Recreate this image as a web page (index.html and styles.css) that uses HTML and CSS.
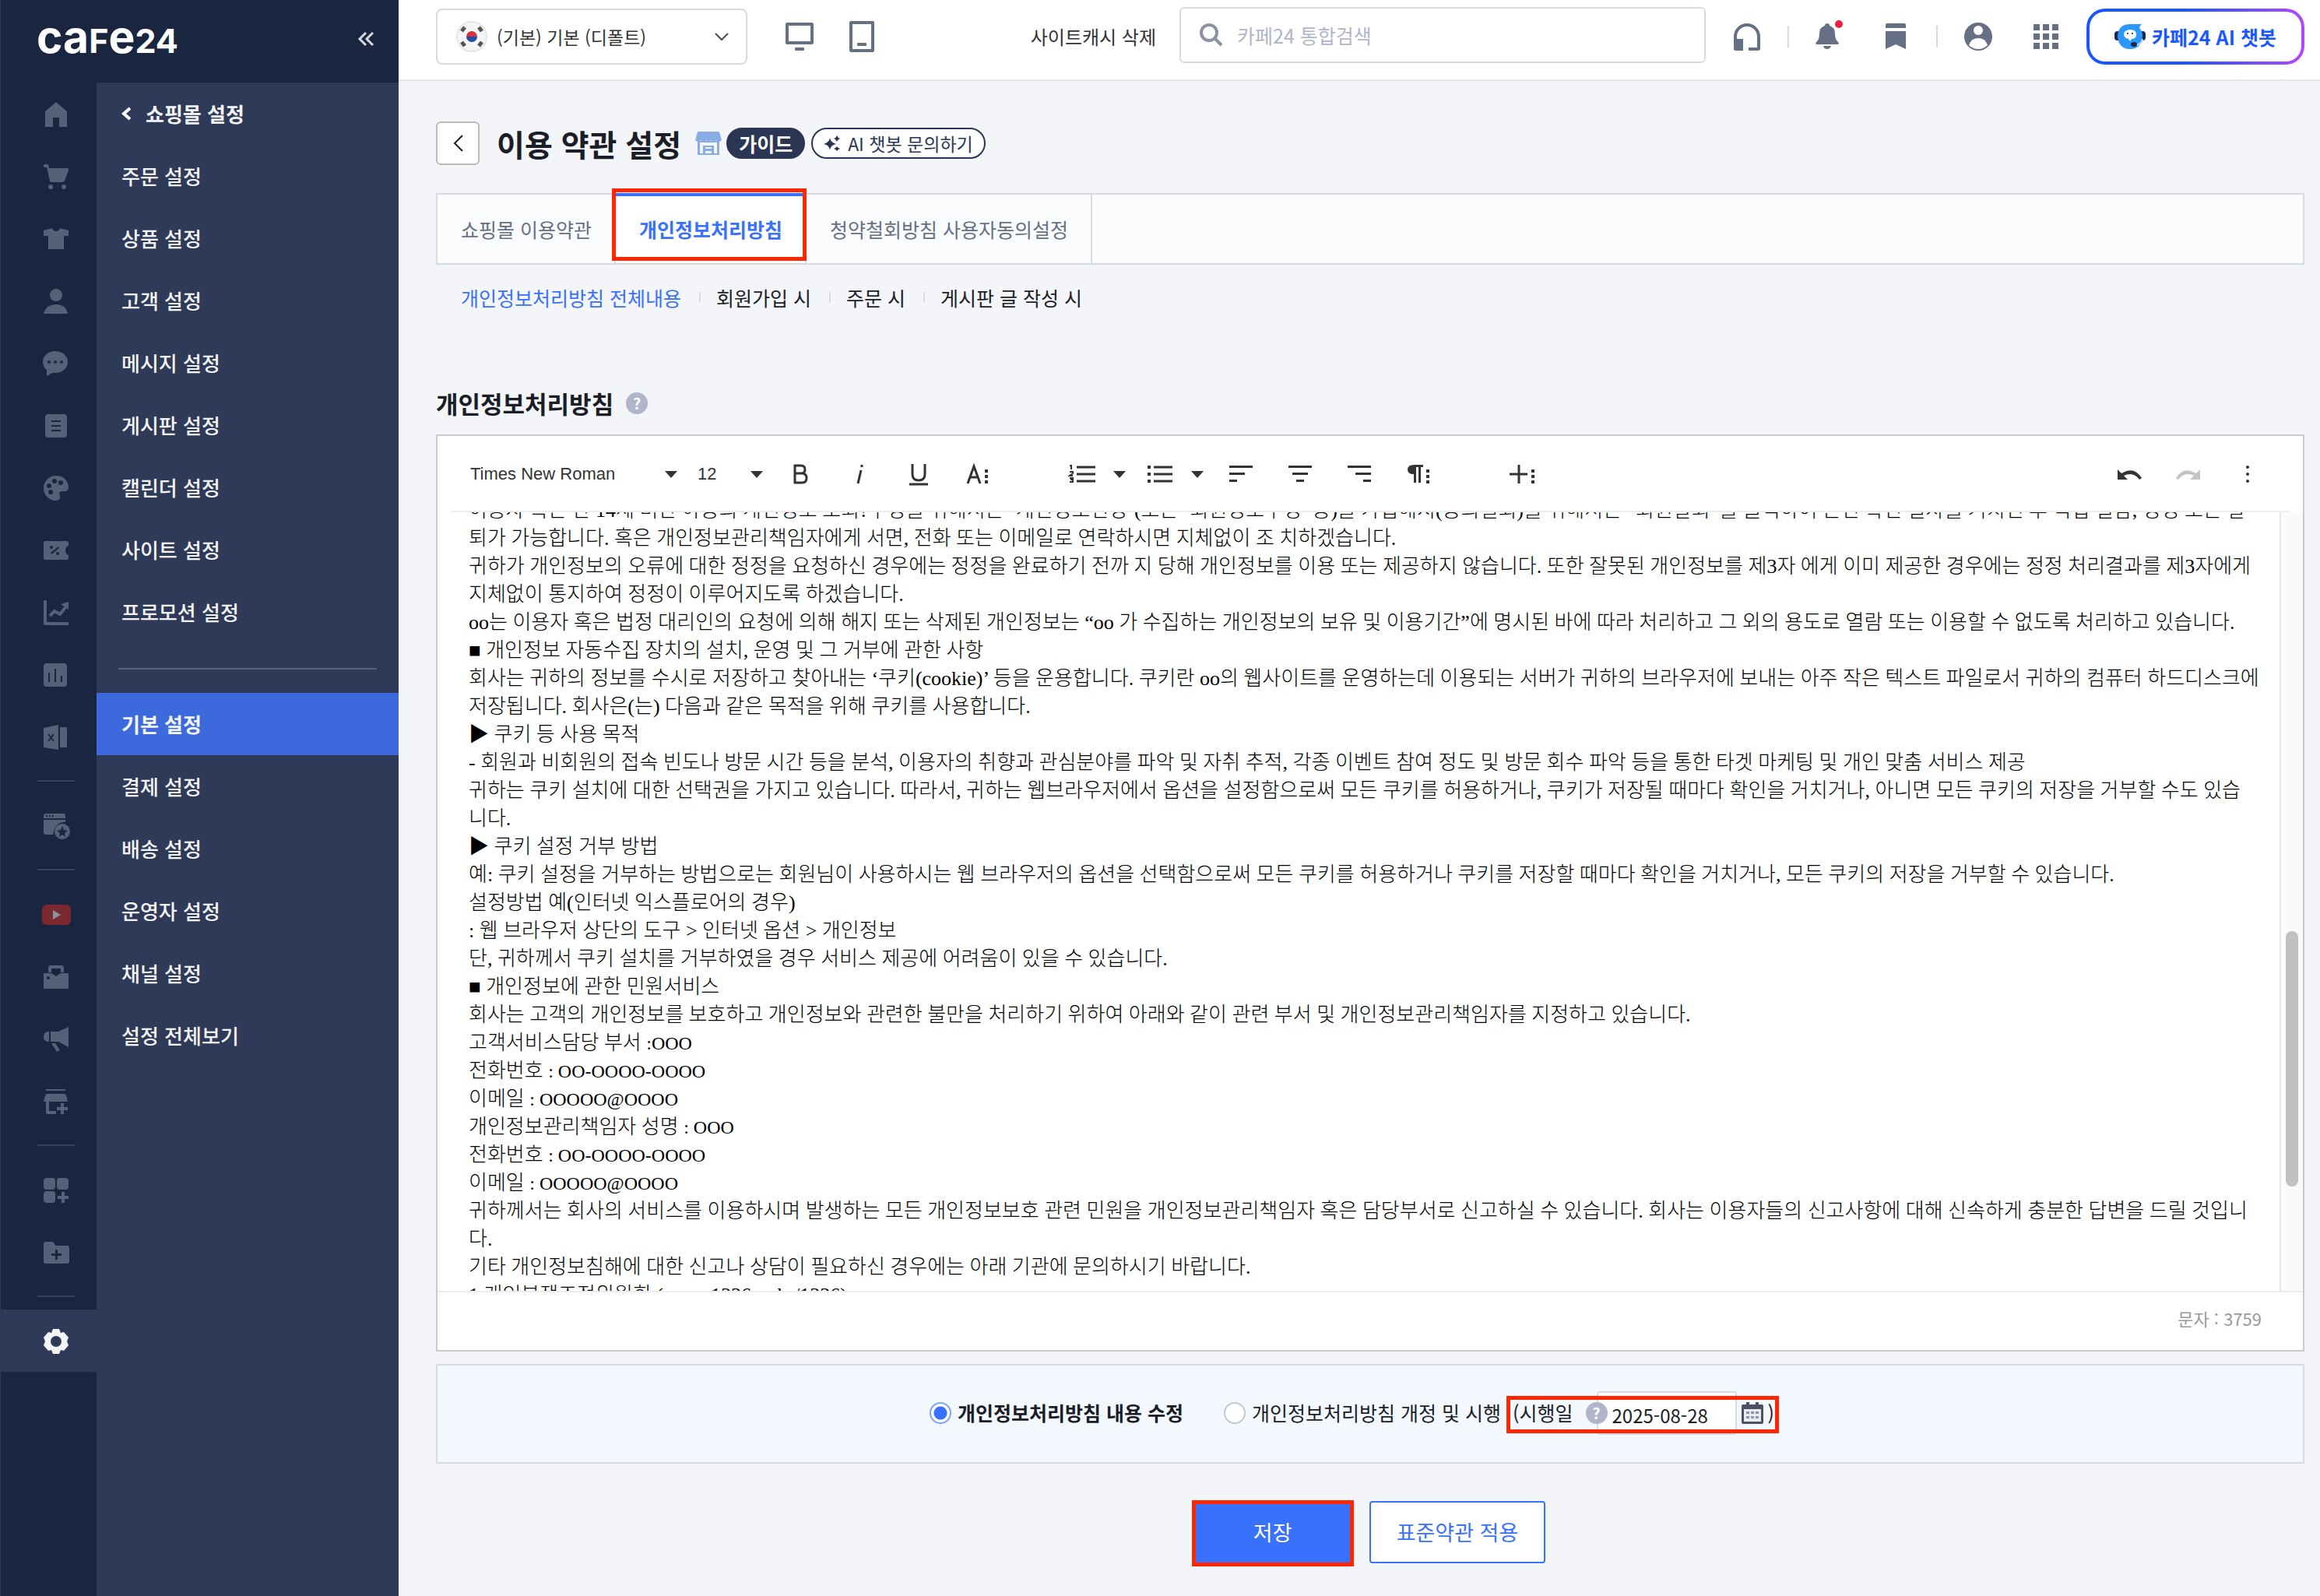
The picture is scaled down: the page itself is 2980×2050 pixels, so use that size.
FILE: index.html
```html
<!DOCTYPE html>
<html lang="ko">
<head>
    <meta charset="UTF-8">
    <meta name="viewport" content="width=device-width, initial-scale=1.0">
    <title>이용 약관 설정 - 카페24</title>
    <link rel="stylesheet" href="styles.css">
</head>
<body>
    <div class="layout">
        <aside class="sidebar">
            <div class="sidebar-head">
                <a href="#" class="logo" aria-label="cafe24"><span class="low">ca</span>F<span class="low">e</span>24</a>
                <button type="button" class="collapse" aria-label="메뉴 접기">
                    <svg width="20" height="18" viewBox="0 0 20 18" fill="none" stroke="#d5d8df" stroke-width="3"><path d="M10 1 2 9l8 8M19 1l-8 8 8 8"/></svg>
                </button>
            </div>
            <div class="sidebar-body">
                <nav class="rail" aria-label="주 메뉴">
                    <a href="#" aria-label="홈"><svg viewBox="0 0 32 32"><path d="M16 0 2 12v19q0 1 1 1h9V20h8v12h9q1 0 1-1V12z"/></svg></a>
                    <a href="#" aria-label="주문"><svg viewBox="0 0 32 32"><path d="M1 0h4q1 0 2 5h23q3 0 2 3l-5 13q-1 2-3 2H10q-2 0-2-2L4 4H1q-2-2 0-4z"/><circle cx="9" cy="29" r="3"/><circle cx="26" cy="29" r="3"/></svg></a>
                    <a href="#" aria-label="상품"><svg viewBox="0 0 32 32"><path d="M0 5 11 2q1 4 5 4t5-4l11 3v7h-6v16q0 1-1 1H7q-1 0-1-1V12H0z"/></svg></a>
                    <a href="#" aria-label="고객"><svg viewBox="0 0 32 32"><circle cx="16" cy="8" r="8"/><path d="M0 31q4-11 16-11t15 11q0 1-1 1H1q-1 0-1-1z"/></svg></a>
                    <a href="#" aria-label="메시지"><svg viewBox="0 0 32 32"><ellipse cx="15" cy="14" rx="16" ry="14"/><path d="M4 22v10l9-5z"/><g class="cut"><circle cx="7" cy="14" r="2"/><circle cx="15" cy="14" r="2"/><circle cx="23" cy="14" r="2"/></g></svg></a>
                    <a href="#" aria-label="게시판"><svg viewBox="0 0 32 32"><rect x="2" y="1" width="28" height="30" rx="4"/><path class="cut" d="M10 9h12v2H10zM10 15h12v2H10zM10 21h12v2H10z"/></svg></a>
                    <a href="#" aria-label="디자인"><svg viewBox="0 0 32 32"><path d="M16 0C7 0 0 7 0 16s7 16 16 16c4 0 6-3 5-6-2-4 0-6 3-6h3c3 0 5-2 5-5C32 6 25 0 16 0z"/><g class="cut"><circle cx="7" cy="13" r="3"/><circle cx="14" cy="7" r="3"/><circle cx="22" cy="9" r="3"/><circle cx="9" cy="21" r="3"/></g></svg></a>
                    <a href="#" aria-label="프로모션"><svg viewBox="0 0 32 32"><path d="M2 4h28q2 0 2 3v3q-4 1-4 6t4 6v3q0 3-2 3H2q-2 0-2-3V7q0-3 2-3z"/><g class="cut"><path d="M9 19 19 11l1 2L10 21z"/><circle cx="10" cy="12" r="2"/><circle cx="18" cy="20" r="2"/></g></svg></a>
                    <a href="#" aria-label="통계"><svg viewBox="0 0 32 32"><path d="M0 0h4v28h28v4H2q-2 0-2-2z"/><path d="m8 20 6-6 7 4 8-10" fill="none" stroke="#566079" stroke-width="4"/><path d="m22 5 10-3v10z"/></svg></a>
                    <a href="#" aria-label="분석"><svg viewBox="0 0 32 32"><rect y="1" width="30" height="30" rx="4"/><path class="cut" d="M6 13h2v12H6zM14 8h2v17h-2zM22 17h2v8h-2z"/></svg></a>
                    <a href="#" aria-label="엑셀"><svg viewBox="0 0 32 32"><path d="M0 4 19 0v32L0 29zM21 3h8q1 0 1 2v22q0 2-1 2h-8z"/><path d="m6 12 7 9m0-9-7 9" fill="none" stroke="#1a2640" stroke-width="2"/></svg></a>
                    <hr>
                    <a href="#" aria-label="앱"><svg viewBox="0 0 32 32"><path d="M0 6V3q0-3 3-3h22q3 0 3 3v3zM0 8h28v3q-13-1-16 16H3q-3 0-3-3z"/><circle cx="24" cy="23" r="10"/><path class="cut" d="m24 16 2 5 5 1-4 3 1 5-4-3-4 3 1-5-4-3 5-1z"/><path class="cut" d="M3 2h2v2H3zM7 2h2v2H7zM11 2h2v2h-2z"/></svg></a>
                    <hr>
                    <a href="#" aria-label="유튜브"><svg viewBox="0 0 32 32"><rect x="-2" y="3" width="37" height="26" rx="6" fill="#79292f"/><path d="m12 10 10 6-10 6z" fill="#8c8f9c"/></svg></a>
                    <a href="#" aria-label="비즈니스"><svg viewBox="0 0 32 32"><path d="M6 10V4q0-3 3-3h14q3 0 3 3v6h-4V5H10v5z"/><path d="M1 11h9l6 4 6-4h9q1 0 1 1v18q0 1-1 1H1q-1 0-1-1V12q0-1 1-1z"/><circle class="cut" cx="6" cy="17" r="2"/></svg></a>
                    <a href="#" aria-label="마케팅"><svg viewBox="0 0 32 32"><path d="M7 6v13Q0 19 0 13q0-7 7-7zM9 6h10L32 0v26l-13-7H9zM10 21h5l6 9-4 2z"/></svg></a>
                    <a href="#" aria-label="마켓"><svg viewBox="0 0 32 32"><path d="M3 0h25v2H3zM4 6h23q2 0 4 10H0Q2 6 4 6zM3 16h4v12h9v4H5q-2 0-2-2zM22 18h4v5h5v4h-5v5h-4v-5h-5v-4h5z"/></svg></a>
                    <hr>
                    <a href="#" aria-label="앱스토어"><svg viewBox="0 0 32 32"><rect width="15" height="15" rx="4"/><rect x="17" width="15" height="15" rx="4"/><rect y="17" width="15" height="15" rx="4"/><path d="M23 18h4v5h5v4h-5v5h-4v-5h-5v-4h5z"/></svg></a>
                    <a href="#" aria-label="폴더 추가"><svg viewBox="0 0 32 32"><path d="M3 2h8q2 0 4 5h15q3 0 3 3v17q0 3-3 3H3q-3 0-3-3V5q0-3 3-3z"/><path class="cut" d="M15 12h3v5h5v3h-5v5h-3v-5h-5v-3h5z"/></svg></a>
                    <hr>
                    <a href="#" class="active" aria-label="설정"><svg viewBox="0 0 32 32"><path d="M12 0h8l2 5 4-1 6 7-2 5 2 5-6 7-4-1-2 5h-8l-2-5-4 1-6-7 2-5-2-5 6-7 4 1z"/><circle cx="16" cy="16" r="7" fill="#2e3a57"/></svg></a>
                </nav>
                <nav class="submenu" aria-label="쇼핑몰 설정">
                    <a href="#" class="submenu-title"><svg width="12" height="18" viewBox="0 0 12 18" fill="none" stroke="#fff" stroke-width="4"><path d="M11 2 3 9l8 7"/></svg>쇼핑몰 설정</a>
                    <a href="#">주문 설정</a>
                    <a href="#">상품 설정</a>
                    <a href="#">고객 설정</a>
                    <a href="#">메시지 설정</a>
                    <a href="#">게시판 설정</a>
                    <a href="#">캘린더 설정</a>
                    <a href="#">사이트 설정</a>
                    <a href="#">프로모션 설정</a>
                    <hr>
                    <a href="#" class="active">기본 설정</a>
                    <a href="#">결제 설정</a>
                    <a href="#">배송 설정</a>
                    <a href="#">운영자 설정</a>
                    <a href="#">채널 설정</a>
                    <a href="#">설정 전체보기</a>
                </nav>
            </div>
        </aside>

        <div class="page">
            <header class="topbar">
                <div class="shop-select">
                    <svg class="flag" width="40" height="40" viewBox="0 0 40 40"><circle cx="20" cy="20" r="19" fill="#f4f5f7" stroke="#e3e5ea" stroke-width="2"/><path d="M13 20a7 7 0 0 1 14 0z" fill="#d8303f"/><path d="M13 20a7 7 0 0 0 14 0z" fill="#1f4fa8"/><g stroke="#555" stroke-width="5"><path d="m7 13 4-5M29 8l4 5M7 27l4 5M29 32l4-5"/></g></svg>
                    <select aria-label="쇼핑몰 선택"><option>(기본) 기본 (디폴트)</option></select>
                    <svg class="chevron" width="18" height="11" viewBox="0 0 18 11" fill="none" stroke="#454b57" stroke-width="2"><path d="m1 1 8 8 8-8"/></svg>
                </div>
                <button type="button" class="device" aria-label="PC"><svg width="36" height="36" viewBox="0 0 36 36" fill="#667085"><path fill-rule="evenodd" d="M2 0h32q2 0 2 2v24q0 2-2 2H2q-2 0-2-2V2q0-2 2-2zm2 4v20h28V4z"/><rect x="12" y="32" width="12" height="4" rx="1"/></svg></button>
                <button type="button" class="device" aria-label="모바일"><svg width="32" height="40" viewBox="0 0 32 40" fill="#667085"><path fill-rule="evenodd" d="M2 0h28q2 0 2 2v36q0 2-2 2H2q-2 0-2-2V2q0-2 2-2zm2 4v32h24V4z"/><rect x="10" y="28" width="12" height="4" rx="1"/></svg></button>
                <a href="#" class="cache-link">사이트캐시 삭제</a>
                <div class="search">
                    <svg width="30" height="30" viewBox="0 0 30 30" fill="none" stroke="#8b92a3" stroke-width="4"><circle cx="12" cy="12" r="10"/><path d="m19 19 9 9"/></svg>
                    <input type="search" placeholder="카페24 통합검색" aria-label="카페24 통합검색">
                </div>
                <div class="tools">
                    <a href="#" aria-label="고객센터"><svg width="36" height="36" viewBox="0 0 36 36" fill="#667085"><path d="M1 34V18a17 17 0 0 1 34 0v15q0 3-3 3H20v-4h11V18a13 13 0 0 0-26 0v3h8v15H3q-2 0-2-2z"/></svg></a>
                    <span class="bar"></span>
                    <a href="#" class="bell" aria-label="알림"><svg width="30" height="34" viewBox="0 0 30 34" fill="#667085"><path d="M15 0q3 0 3 3 7 2 7 10 0 8 4 11 2 3-1 3H2q-3 0-1-3 4-3 4-11Q5 5 12 3q0-3 3-3zM10 29h10q-1 4-5 4t-5-4z"/></svg></a>
                    <a href="#" class="bookmark" aria-label="북마크"><svg width="26" height="34" viewBox="0 0 26 34" fill="#667085"><path d="M0 2q0-2 2-2h22q2 0 2 2v4H0zM0 10h26v23l-13-6-13 6z"/></svg></a>
                    <span class="bar"></span>
                    <a href="#" aria-label="계정"><svg width="36" height="36" viewBox="0 0 36 36"><circle cx="18" cy="18" r="18" fill="#667085"/><circle cx="18" cy="10" r="6" fill="#fff"/><path d="M6 29q3-9 12-9t12 9q-5 5-12 5T6 29z" fill="#fff"/></svg></a>
                    <a href="#" aria-label="전체 서비스"><svg width="32" height="32" viewBox="0 0 32 32" fill="#667085"><path d="M0 0h8v8H0zM12 0h8v8h-8zM24 0h8v8h-8zM0 12h8v8H0zM12 12h8v8h-8zM24 12h8v8h-8zM0 24h8v8H0zM12 24h8v8h-8zM24 24h8v8h-8z"/></svg></a>
                </div>
                <button type="button" class="chatbot">
                    <svg width="40" height="34" viewBox="0 0 40 34"><rect y="10" width="8" height="12" rx="4" fill="#1b2b4d"/><rect x="32" y="10" width="8" height="12" rx="4" fill="#1b2b4d"/><path d="M4 16Q5 1 20 1h15q-3 2-3 5 4 4 4 10-1 17-16 17T4 16z" fill="#2b97ff"/><path d="M20 8q8 0 8 6t-6 6l-2 3-2-3q-6-1-6-6t8-6z" fill="#fff"/><circle cx="17" cy="13" r="1" fill="#123"/><circle cx="23" cy="13" r="1" fill="#123"/><path d="M36 20q-1 7-9 8" fill="none" stroke="#bcd9ff" stroke-width="2"/><ellipse cx="25" cy="27" rx="4" ry="3" fill="#1b2b4d"/></svg>
                    카페24 AI 챗봇
                </button>
            </header>

            <main class="content">
                <div class="title-row">
                    <button type="button" class="back" aria-label="뒤로"><svg width="13" height="22" viewBox="0 0 13 22" fill="none" stroke="#1b1e26" stroke-width="2"><path d="M12 1 2 11l10 10"/></svg></button>
                    <h1>이용 약관 설정</h1>
                    <svg class="store" width="34" height="30" viewBox="0 0 34 30" fill="#88ade2"><path d="M4 0h26q1 0 2 4l2 7q-4 4-7 0-4 4-7 0-3 3-6 0-4 4-7 0-3 4-7 0l2-7q1-4 2-4z"/><path fill-rule="evenodd" d="M3 12h28v18H3zm3 2v14h4V18h14v10h4V14zm7 6v2h8v-2zm0 5v3h8v-3z"/></svg>
                    <a href="#" class="pill pill-dark">가이드</a>
                    <a href="#" class="pill pill-line"><svg width="22" height="20" viewBox="0 0 22 20" fill="#2b3655"><path d="M8 3q1 6 8 8-7 1-8 8-1-7-8-8 7-2 8-8zM17 0q1 3 4 4-3 1-4 4-1-3-4-4 3-1 4-4zM17 14q1 2 4 3-3 1-4 3-1-2-4-3 3-1 4-3z"/></svg>AI 챗봇 문의하기</a>
                </div>

                <nav class="tabs">
                    <a href="#">쇼핑몰 이용약관</a>
                    <a href="#" class="active">개인정보처리방침</a>
                    <a href="#">청약철회방침 사용자동의설정</a>
                </nav>
                <nav class="subtabs">
                    <a href="#" class="active">개인정보처리방침 전체내용</a>
                    <a href="#">회원가입 시</a>
                    <a href="#">주문 시</a>
                    <a href="#">게시판 글 작성 시</a>
                </nav>

                <div class="section-title">
                    <h2>개인정보처리방침</h2>
                    <button type="button" class="help" aria-label="도움말">?</button>
                </div>

                <section class="editor">
                    <div class="toolbar">
                        <span class="pick pick-font"><select aria-label="글꼴"><option>Times New Roman</option></select></span>
                        <span class="pick pick-size"><select aria-label="글자 크기"><option>12</option></select></span>
                        <button type="button" aria-label="굵게"><svg width="24" height="30" viewBox="0 0 24 30" fill="none" stroke="#333" stroke-width="3"><path d="M5 4h8q5 0 5 5t-5 5H5zM5 14h9q6 0 6 6t-6 6H5z"/></svg></button>
                        <button type="button" aria-label="기울임"><svg width="24" height="30" viewBox="0 0 24 30" fill="none" stroke="#333" stroke-width="3"><path d="m14 10-4 17M15 3v3"/></svg></button>
                        <button type="button" aria-label="밑줄"><svg width="24" height="30" viewBox="0 0 24 30" fill="none" stroke="#333" stroke-width="3"><path d="M4 2v13q0 8 8 8t8-8V2M0 28h24"/></svg></button>
                        <button type="button" aria-label="글자 더보기"><svg width="30" height="26" viewBox="0 0 30 26" fill="none" stroke="#333" stroke-width="3"><path d="M2 25 10 3l8 22M5 17h10"/><path d="M26 7v4M26 14v4M26 21v4" stroke-width="4"/></svg></button>
                        <div class="split">
                            <button type="button" aria-label="번호 목록"><svg width="34" height="24" viewBox="0 0 34 24" fill="none" stroke="#333"><path d="M10 3h24M10 12h24M10 21h24" stroke-width="3"/><path d="M1 1h2v5M1 9h4v2l-4 3h4M1 17h4v5H1m1-3h3" stroke-width="2"/></svg></button>
                            <button type="button" class="caret" aria-label="번호 목록 옵션"></button>
                        </div>
                        <div class="split">
                            <button type="button" aria-label="목록"><svg width="32" height="24" viewBox="0 0 32 24" fill="none" stroke="#333"><path d="M8 3h24M8 12h24M8 21h24" stroke-width="3"/><path d="M0 3h4M0 12h4M0 21h4" stroke-width="4"/></svg></button>
                            <button type="button" class="caret" aria-label="목록 옵션"></button>
                        </div>
                        <button type="button" aria-label="왼쪽 정렬"><svg width="30" height="22" viewBox="0 0 30 22" fill="#333"><path d="M0 0h30v3H0zM0 9h20v3H0zM0 18h10v3H0z"/></svg></button>
                        <button type="button" aria-label="가운데 정렬"><svg width="30" height="22" viewBox="0 0 30 22" fill="#333"><path d="M0 0h30v3H0zM5 9h20v3H5zM10 18h10v3H10z"/></svg></button>
                        <button type="button" aria-label="오른쪽 정렬"><svg width="30" height="22" viewBox="0 0 30 22" fill="#333"><path d="M0 0h30v3H0zM10 9h20v3H10zM20 18h10v3H20z"/></svg></button>
                        <button type="button" aria-label="문단 더보기"><svg width="30" height="26" viewBox="0 0 30 26" fill="none" stroke="#333"><path d="M10 1h11v3H18v20h-3V4h-3v20H9V13Q1 13 1 7t9-6z" fill="#333" stroke="none"/><path d="M27 7v4M27 14v4M27 21v4" stroke-width="4"/></svg></button>
                        <button type="button" class="insert" aria-label="삽입"><svg width="34" height="26" viewBox="0 0 34 26" fill="none" stroke="#333" stroke-width="3"><path d="M0 13h23M12 1v24"/><path d="M30 7v4M30 14v4M30 21v4" stroke-width="4"/></svg></button>
                        <div class="history">
                            <button type="button" aria-label="실행 취소"><svg width="32" height="20" viewBox="0 0 32 20"><path d="M1 4v13h13l-5-5q12-6 20 5l3-2Q22-1 6 9z" fill="#333"/></svg></button>
                            <button type="button" aria-label="다시 실행"><svg width="32" height="20" viewBox="0 0 32 20"><path d="M31 4v13H18l5-5q-12-6-20 5l-3-2Q10-1 26 9z" fill="#c4c4c4"/></svg></button>
                            <button type="button" aria-label="더보기"><svg width="6" height="24" viewBox="0 0 6 24" fill="#333"><circle cx="3" cy="3" r="2"/><circle cx="3" cy="12" r="2"/><circle cx="3" cy="21" r="2"/></svg></button>
                        </div>
                    </div>
                    <div class="editor-view">
                        <div class="editor-text" role="textbox" aria-multiline="true" aria-label="개인정보처리방침 내용" contenteditable="true" spellcheck="false">이용자 혹은 만 14세 미만 아동의 개인정보 조회?수정을 위해서는 ‘개인정보변경’(또는 ‘회원정보수정’ 등)을 가입해지(동의철회)를 위해서는 “회원탈퇴”를 클릭하여 본인 확인 절차를 거치신 후 직접 열람, 정정 또는 탈<br>
퇴가 가능합니다. 혹은 개인정보관리책임자에게 서면, 전화 또는 이메일로 연락하시면 지체없이 조 치하겠습니다.<br>
귀하가 개인정보의 오류에 대한 정정을 요청하신 경우에는 정정을 완료하기 전까 지 당해 개인정보를 이용 또는 제공하지 않습니다. 또한 잘못된 개인정보를 제3자 에게 이미 제공한 경우에는 정정 처리결과를 제3자에게<br>
지체없이 통지하여 정정이 이루어지도록 하겠습니다.<br>
oo는 이용자 혹은 법정 대리인의 요청에 의해 해지 또는 삭제된 개인정보는 “oo 가 수집하는 개인정보의 보유 및 이용기간”에 명시된 바에 따라 처리하고 그 외의 용도로 열람 또는 이용할 수 없도록 처리하고 있습니다.<br>
■ 개인정보 자동수집 장치의 설치, 운영 및 그 거부에 관한 사항<br>
회사는 귀하의 정보를 수시로 저장하고 찾아내는 ‘쿠키(cookie)’ 등을 운용합니다. 쿠키란 oo의 웹사이트를 운영하는데 이용되는 서버가 귀하의 브라우저에 보내는 아주 작은 텍스트 파일로서 귀하의 컴퓨터 하드디스크에<br>
저장됩니다. 회사은(는) 다음과 같은 목적을 위해 쿠키를 사용합니다.<br>
▶ 쿠키 등 사용 목적<br>
- 회원과 비회원의 접속 빈도나 방문 시간 등을 분석, 이용자의 취향과 관심분야를 파악 및 자취 추적, 각종 이벤트 참여 정도 및 방문 회수 파악 등을 통한 타겟 마케팅 및 개인 맞춤 서비스 제공<br>
귀하는 쿠키 설치에 대한 선택권을 가지고 있습니다. 따라서, 귀하는 웹브라우저에서 옵션을 설정함으로써 모든 쿠키를 허용하거나, 쿠키가 저장될 때마다 확인을 거치거나, 아니면 모든 쿠키의 저장을 거부할 수도 있습<br>
니다.<br>
▶ 쿠키 설정 거부 방법<br>
예: 쿠키 설정을 거부하는 방법으로는 회원님이 사용하시는 웹 브라우저의 옵션을 선택함으로써 모든 쿠키를 허용하거나 쿠키를 저장할 때마다 확인을 거치거나, 모든 쿠키의 저장을 거부할 수 있습니다.<br>
설정방법 예(인터넷 익스플로어의 경우)<br>
: 웹 브라우저 상단의 도구 &gt; 인터넷 옵션 &gt; 개인정보<br>
단, 귀하께서 쿠키 설치를 거부하였을 경우 서비스 제공에 어려움이 있을 수 있습니다.<br>
■ 개인정보에 관한 민원서비스<br>
회사는 고객의 개인정보를 보호하고 개인정보와 관련한 불만을 처리하기 위하여 아래와 같이 관련 부서 및 개인정보관리책임자를 지정하고 있습니다.<br>
고객서비스담당 부서 <span class="blank">:OOO</span><br>
전화번호 <span class="blank">: OO-OOOO-OOOO</span><br>
이메일 <span class="blank">: OOOOO@OOOO</span><br>
개인정보관리책임자 성명 <span class="blank">: OOO</span><br>
전화번호 <span class="blank">: OO-OOOO-OOOO</span><br>
이메일 <span class="blank">: OOOOO@OOOO</span><br>
귀하께서는 회사의 서비스를 이용하시며 발생하는 모든 개인정보보호 관련 민원을 개인정보관리책임자 혹은 담당부서로 신고하실 수 있습니다. 회사는 이용자들의 신고사항에 대해 신속하게 충분한 답변을 드릴 것입니<br>
다.<br>
기타 개인정보침해에 대한 신고나 상담이 필요하신 경우에는 아래 기관에 문의하시기 바랍니다.<br>
1.개인분쟁조정위원회 (www.1336.or.kr/1336)</div>
                        <div class="scrollbar"><div class="thumb"></div></div>
                    </div>
                    <div class="editor-foot">문자 : 3759</div>
                </section>

                <form class="options" id="policyForm">
                    <label class="radio radio-on"><input type="radio" name="mode" checked><span>개인정보처리방침 내용 수정</span></label>
                    <label class="radio"><input type="radio" name="mode"><span>개인정보처리방침 개정 및 시행</span></label>
                    <div class="effective">
                        <label for="effectiveDate">(시행일</label>
                        <button type="button" class="help" aria-label="시행일 도움말">?</button>
                        <input type="text" id="effectiveDate" value="2025-08-28">
                        <button type="button" class="calendar" aria-label="달력"><svg width="28" height="28" viewBox="0 0 28 28"><path d="M2 3h4V0h4v3h8V0h4v3h4q2 0 2 2v21q0 2-2 2H2q-2 0-2-2V5q0-2 2-2z" fill="#4b5163"/><rect x="3" y="9" width="22" height="16" fill="#e9ebf1"/><path d="M6 12h4v3H6zM12 12h4v3h-4zM18 12h4v3h-4zM6 18h4v3H6zM12 18h4v3h-4zM18 18h4v3h-4z" fill="#8d93a5"/></svg></button>
                        <span>)</span>
                    </div>
                </form>

                <div class="actions">
                    <button type="submit" form="policyForm" class="btn btn-save">저장</button>
                    <button type="button" class="btn">표준약관 적용</button>
                </div>
            </main>
        </div>
    </div>
</body>
</html>
```

FILE: styles.css
```css
* {
    box-sizing: border-box;
}
body {
    margin: 0;
    background: #f3f5f9;
    color: #1b1e26;
    font-family: "Noto Sans CJK KR", sans-serif;
    font-size: 25px;
    line-height: 36px;
}
a {
    color: inherit;
    text-decoration: none;
}
button, input, select {
    font: inherit;
    color: inherit;
}
button {
    display: flex;
    align-items: center;
    justify-content: center;
    margin: 0;
    padding: 0;
    border: none;
    background: none;
    cursor: pointer;
}
select {
    appearance: none;
    border: none;
    background: none;
    cursor: pointer;
}
svg {
    display: block;
    flex: none;
    overflow: visible;
}
.layout {
    display: flex;
    min-height: 100vh;
}

/* sidebar */
.sidebar {
    display: flex;
    flex-direction: column;
    flex: none;
    width: 512px;
    background: #1a2640;
    border-left: 1px solid #2e3a57;
}
.sidebar-head {
    display: flex;
    align-items: center;
    justify-content: space-between;
    height: 106px;
    padding: 0 32px 6px 46px;
}
.logo {
    color: #fff;
    font-family: Inter, sans-serif;
    font-size: 43px;
    font-weight: 700;
    line-height: 60px;
}
.logo .low {
    font-size: 57px;
}
.sidebar-body {
    display: flex;
    flex: 1;
}
.rail {
    width: 123px;
    flex: none;
}
.rail a {
    display: flex;
    align-items: center;
    height: 80px;
    padding: 2px 0 0 55px;
}
.rail svg {
    width: 32px;
    height: 32px;
    fill: #566079;
}
.rail .cut {
    fill: #1a2640;
}
.rail hr {
    width: 48px;
    height: 2px;
    margin: 16px 0 16px 47px;
    border: none;
    background: #364159;
}
.rail .active {
    background: #2e3a57;
}
.rail .active svg {
    fill: #f3f4f6;
}
.submenu {
    flex: 1;
    background: #2e3a57;
    color: #f3f4f6;
    font-size: 26px;
    font-weight: 500;
}
.submenu a {
    display: flex;
    align-items: center;
    height: 80px;
    padding-left: 32px;
}
.submenu .submenu-title {
    gap: 19px;
    font-weight: 700;
}
.submenu hr {
    height: 2px;
    margin: 32px 28px 30px;
    border: none;
    background: #566079;
}
.submenu .active {
    background: #3c6adc;
    font-weight: 700;
}

/* top bar */
.page {
    flex: 1;
    min-width: 0;
}
.topbar {
    display: flex;
    align-items: center;
    height: 104px;
    padding: 0 20px 8px 48px;
    background: #fff;
    border-bottom: 2px solid #e3e4e9;
    color: #333;
}
.shop-select {
    display: flex;
    align-items: center;
    position: relative;
    width: 400px;
    height: 72px;
    margin-right: 27px;
    border: 2px solid #d6dae2;
    border-radius: 8px;
}
.shop-select select {
    width: 100%;
    height: 100%;
    padding: 0 60px 0 76px;
    font-size: 23px;
}
.flag {
    position: absolute;
    left: 24px;
    pointer-events: none;
}
.chevron {
    position: absolute;
    right: 22px;
    pointer-events: none;
}
.device {
    width: 80px;
    height: 72px;
}
.cache-link {
    margin-left: auto;
    font-size: 24px;
}
.search {
    display: flex;
    align-items: center;
    gap: 18px;
    width: 676px;
    height: 72px;
    margin: 0 0 4px 30px;
    padding-left: 24px;
    border: 2px solid #d6dae2;
    border-radius: 6px;
}
.search input {
    flex: 1;
    min-width: 0;
    padding: 0;
    border: none;
    outline: none;
    background: none;
}
.search input::placeholder {
    color: #b0b5cb;
}
.tools {
    display: flex;
    align-items: center;
    gap: 34px;
    margin-left: 35px;
}
.tools .bar {
    width: 2px;
    height: 28px;
    background: #d6dae2;
}
.bell {
    position: relative;
    margin-right: 26px;
}
.bell::after {
    content: "";
    position: absolute;
    top: -4px;
    right: -5px;
    width: 10px;
    height: 10px;
    border-radius: 50%;
    background: #eb1f45;
}
.bookmark {
    margin-right: 5px;
}
.tools a:last-child {
    margin-left: 19px;
}
.chatbot {
    gap: 8px;
    width: 280px;
    height: 72px;
    margin-left: 36px;
    border: 4px solid transparent;
    border-radius: 24px;
    background: linear-gradient(#fff, #fff) padding-box, linear-gradient(90deg, #1a56ff 45%, #b347ff) border-box;
    color: #1957ff;
    font-weight: 700;
}

/* page title */
.content {
    padding: 52px 20px 38px 48px;
}
.title-row {
    display: flex;
    align-items: center;
}
.back {
    width: 56px;
    height: 56px;
    margin-right: 22px;
    border: 2px solid #bcbcbc;
    border-radius: 6px;
    background: #fff;
}
h1, h2 {
    margin: 0;
}
h1 {
    font-size: 39px;
    line-height: 56px;
}
.store {
    margin: 0 6px 0 18px;
}
.pill {
    display: flex;
    align-items: center;
    height: 40px;
    padding: 0 14px;
    border: 2px solid #2b3655;
    border-radius: 20px;
    font-size: 23px;
}
.pill-dark {
    margin-right: 8px;
    background: #2b3655;
    color: #fff;
    font-size: 25px;
    font-weight: 700;
}
.pill-line {
    gap: 9px;
    background: #fff;
    color: #2b3655;
}

/* tabs */
.tabs {
    display: flex;
    height: 92px;
    margin-top: 36px;
    border: 2px solid #d6dae2;
    background: #fafbfd;
    color: #667085;
}
.tabs a {
    display: flex;
    align-items: center;
    position: relative;
    padding: 0 29px 0 30px;
    border-right: 2px solid #d6dae2;
}
.tabs .active {
    background: #fff;
    box-shadow: inset 0 2px #3971ff, 0 -2px #3971ff;
    color: #3971ff;
    font-weight: 700;
}
/* marks the open tab */
.tabs .active::after {
    content: "";
    position: absolute;
    inset: -8px -2px 3px -5px;
    border: 5px solid #ff2600;
}
.subtabs {
    display: flex;
    align-items: center;
    height: 84px;
    padding-left: 32px;
}
.subtabs a {
    display: flex;
    align-items: center;
}
.subtabs a + a::before {
    content: "";
    width: 2px;
    height: 14px;
    margin: 0 20px 0 23px;
    background: #d6dae2;
}
.subtabs .active {
    color: #3971ff;
}
.section-title {
    display: flex;
    align-items: center;
    gap: 16px;
    height: 74px;
    margin: 57px 0 3px;
}
h2 {
    font-size: 31px;
    line-height: 44px;
}
.help {
    width: 28px;
    height: 28px;
    border-radius: 50%;
    background: #b0b5cb;
    color: #fff;
    font-size: 20px;
    font-weight: 700;
    line-height: 28px;
}

/* editor */
.editor {
    border: 2px solid #c9cacc;
    background: #fff;
}
.toolbar {
    display: flex;
    align-items: center;
    height: 98px;
    margin: 0 18px;
    padding: 2px 15px 0 24px;
    border-bottom: 2px solid #ededed;
    color: #333;
}
.toolbar button {
    width: 76px;
    height: 76px;
}
.pick {
    position: relative;
    font-family: "Liberation Sans", Arial, sans-serif;
    font-size: 22px;
}
.pick select {
    width: 100%;
    padding: 0;
}
.pick-font {
    width: 276px;
    margin-right: 16px;
}
.pick-size {
    width: 94px;
}
.pick::after, .caret::after {
    content: "";
    border: 8px solid transparent;
    border-top: 9px solid #333;
    border-bottom: none;
}
.pick::after {
    position: absolute;
    top: 14px;
    right: 10px;
    pointer-events: none;
}
.split {
    display: flex;
    margin-left: 4px;
}
button + .split {
    margin-left: 66px;
}
.toolbar .split button {
    width: 60px;
}
.toolbar .split .caret {
    width: 36px;
}
.toolbar .insert {
    margin-left: 58px;
}
.history {
    display: flex;
    margin-left: auto;
}
.editor-view {
    display: flex;
    height: 1000px;
    overflow: hidden;
}
.editor-text {
    flex: 1;
    min-width: 0;
    margin-top: -20px;
    padding-left: 40px;
    outline: none;
    color: #000;
    font-family: "Liberation Serif", "Noto Sans CJK KR", serif;
    font-size: 26px;
    font-weight: 300;
    line-height: 36px;
    white-space: nowrap;
}
.blank {
    font-size: 24px;
}
.scrollbar {
    width: 30px;
    padding: 538px 6px 0;
    border-left: 2px solid #e8e8e8;
    background: #fafafa;
}
.thumb {
    height: 328px;
    border-radius: 8px;
    background: #c1c1c1;
}
.editor-foot {
    height: 76px;
    padding: 15px 53px 0 0;
    border-top: 2px solid #ededed;
    color: #999;
    font-size: 22px;
    text-align: right;
}

/* save options */
.options {
    display: flex;
    align-items: center;
    justify-content: center;
    height: 128px;
    margin-top: 16px;
    padding: 0 47px 2px 0;
    border: 2px solid #d6dae2;
    background: #f3f8ff;
}
.options span, .effective label {
    padding-bottom: 3px;
}
.radio {
    display: flex;
    align-items: center;
    gap: 8px;
    margin-right: 15px;
}
.radio-on {
    margin-right: 52px;
    font-weight: 700;
}
.radio input {
    appearance: none;
    width: 28px;
    height: 28px;
    margin: 0;
    border: 2px solid #c3c8d4;
    border-radius: 50%;
    background: #fff;
}
.radio input:checked {
    border-color: #7fa4ff;
    background: radial-gradient(circle, #3971ff 8px, #fff 9px);
}
.effective {
    display: flex;
    align-items: center;
    position: relative;
}
/* marks the effective date field */
.effective::after {
    content: "";
    position: absolute;
    inset: 6px -6px 2px -8px;
    border: 5px solid #ff2600;
    pointer-events: none;
}
.effective .help {
    z-index: 1;
    margin: 0 -14px 0 16px;
}
.effective input {
    width: 180px;
    height: 56px;
    padding: 4px 18px 0;
    border: 2px solid #d6dae2;
    border-radius: 4px;
    background: #fff;
    font-size: 24px;
}
.calendar {
    margin: 0 6px;
}

.actions {
    display: flex;
    justify-content: center;
    gap: 24px;
    margin-top: 48px;
}
.btn {
    position: relative;
    height: 80px;
    padding: 0 33px;
    border: 2px solid #3971ff;
    border-radius: 4px;
    background: #fff;
    color: #3971ff;
    font-size: 27px;
}
.btn-save {
    width: 200px;
    background: #3971ff;
    color: #fff;
}
.btn-save::after {
    content: "";
    position: absolute;
    inset: -3px -6px -6px;
    border: 5px solid #ff2600;
}
```
